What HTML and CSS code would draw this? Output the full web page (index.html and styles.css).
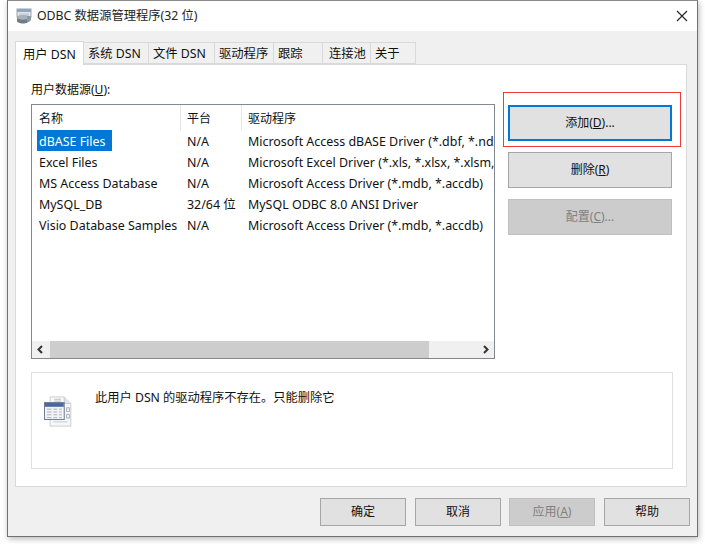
FILE: index.html
```html
<!DOCTYPE html>
<html lang="zh-CN">
<head>
<meta charset="utf-8">
<title>ODBC 数据源管理程序(32 位)</title>
<link rel="stylesheet" href="styles.css">
</head>
<body>
<div class="window">
  <header class="titlebar">
    <svg class="app-icon" width="16" height="16" viewBox="0 0 16 16">
      <rect x="1" y="1" width="14" height="8" fill="#e4e8ee" stroke="#9aa3ad"/>
      <rect x="1" y="1" width="14" height="3" fill="#8fa6bf"/>
      <path d="M3 6h10M3 8h10" stroke="#b6bcc4"/>
      <ellipse cx="7" cy="9" rx="6" ry="2" fill="#a9b4bd"/>
      <path d="M1 9v4c0 1.300 2.700 2.500 6 2.500s6-1.200 6-2.500V9z" fill="#6f7d88"/>
      <ellipse cx="7" cy="9.500" rx="6" ry="2.200" fill="#a6b1ba"/>
      <path d="M11 8h4v4l-2 2h-2z" fill="#8d99a3"/>
    </svg>
    <span class="title">ODBC 数据源管理程序(32 位)</span>
    <svg class="close" width="12" height="12" viewBox="0 0 12 12">
      <path d="M1 1l10 10M11 1L1 11" stroke="#222" stroke-width="1.100" fill="none"/>
    </svg>
  </header>
  <div class="client">
    <nav class="tabs">
      <div class="tab active t1">用户 DSN</div>
      <div class="tab t2">系统 DSN</div>
      <div class="tab t3">文件 DSN</div>
      <div class="tab t4">驱动程序</div>
      <div class="tab t5">跟踪</div>
      <div class="tab t6">连接池</div>
      <div class="tab t7">关于</div>
    </nav>
    <main class="panel">
      <div class="list-side">
        <div class="field-label">用户数据源(<u>U</u>):</div>
        <div class="listbox">
          <div class="list-clip">
            <div class="row head">
              <span class="c1">名称</span><span class="c2">平台</span><span class="c3">驱动程序</span>
            </div>
            <div class="row"><span class="c1"><span class="selected">dBASE Files</span></span><span class="c2">N/A</span><span class="c3">Microsoft Access dBASE Driver (*.dbf, *.ndx, *.mdx)</span></div>
            <div class="row"><span class="c1">Excel Files</span><span class="c2">N/A</span><span class="c3">Microsoft Excel Driver (*.xls, *.xlsx, *.xlsm, *.xlsb)</span></div>
            <div class="row"><span class="c1">MS Access Database</span><span class="c2">N/A</span><span class="c3">Microsoft Access Driver (*.mdb, *.accdb)</span></div>
            <div class="row"><span class="c1">MySQL_DB</span><span class="c2">32/64 位</span><span class="c3">MySQL ODBC 8.0 ANSI Driver</span></div>
            <div class="row"><span class="c1">Visio Database Samples</span><span class="c2">N/A</span><span class="c3">Microsoft Access Driver (*.mdb, *.accdb)</span></div>
          </div>
          <div class="hscroll">
            <svg class="arrow first" width="18" height="17" viewBox="0 0 18 17"><path d="M10 5l-3.500 3.500L10 12" stroke="#333" stroke-width="2" fill="none"/></svg>
            <div class="track"><div class="thumb"></div></div>
            <svg class="arrow" width="17" height="17" viewBox="0 0 17 17"><path d="M7 5l3.500 3.500L7 12" stroke="#333" stroke-width="2" fill="none"/></svg>
          </div>
        </div>
      </div>
      <div class="actions">
        <div class="highlight">
          <button class="btn side primary">添加(<u>D</u>)...</button>
        </div>
        <button class="btn side after-highlight">删除(<u>R</u>)</button>
        <button class="btn side disabled">配置(<u>C</u>)...</button>
      </div>
      <section class="info">
        <svg class="info-icon" width="32" height="33" viewBox="0 0 34 34">
          <path d="M6.500 1.500h15l7 7v24h-22z" fill="#f6f7f8" stroke="#c9ccd0"/>
          <path d="M21.500 1.500v7h7" fill="#e3e5e8" stroke="#c9ccd0"/>
          <path d="M11 4h7M11 6h7" stroke="#b9bdc3"/>
          <path d="M24 13h3v4h-3zM24 20h3v4h-3z" fill="none" stroke="#a8adb5"/>
          <path d="M10 28h15" stroke="#c3c6cb"/>
          <rect x="0.500" y="7.500" width="21" height="18" fill="#f3f4f7" stroke="#6c7488"/>
          <rect x="1" y="8" width="20" height="4" fill="#46679f"/>
          <path d="M3 14.500h5M10 14.500h4M16 14.500h3M3 17.500h5M10 17.500h4M16 17.500h3M3 20.500h5M10 20.500h4M16 20.500h3M3 23.500h5M10 23.500h4M16 23.500h3" stroke="#a9aebb"/>
        </svg>
        <p class="info-text">此用户 DSN 的驱动程序不存在。只能删除它</p>
      </section>
    </main>
    <footer class="footer">
      <button class="btn foot">确定</button>
      <button class="btn foot">取消</button>
      <button class="btn foot disabled">应用(<u>A</u>)</button>
      <button class="btn foot">帮助</button>
    </footer>
  </div>
</div>
</body>
</html>
```

FILE: styles.css
```css
* { box-sizing: border-box; }
html, body { margin: 0; height: 100%; }
body {
  background: #fff;
  font: 12px/16px "Noto Sans", "Noto Sans CJK SC", sans-serif;
  color: #111;
  overflow: hidden;
}
.window {
  margin: 0 0 0 7px;
  width: 691px;
  height: 537px;
  border: 1px solid #707070;
  border-top-color: #8a8a8a;
  background: #f0f0f0;
  box-shadow: 1px 2px 6px rgba(0, 0, 0, .28);
  display: flex;
  flex-direction: column;
}
.titlebar {
  height: 30px;
  background: #fff;
  display: flex;
  align-items: center;
  padding: 0 9px 0 8px;
  flex: none;
}
.app-icon { margin-right: 5px; flex: none; }
.title { flex: 1; font-size: 12.300px; color: #222; }
.client { flex: 1; padding: 10px 10px 0 7px; display: flex; flex-direction: column; }
.tabs { display: flex; height: 23px; align-items: flex-start; position: relative; z-index: 1; }
.tab {
  height: 22px;
  margin-top: 1px;
  border: 1px solid #d9d9d9;
  border-left-width: 0;
  background: #f0f0f0;
  padding-left: 4px;
  line-height: 22px;
  white-space: nowrap;
  font-size: 12.300px;
}
.tab.active {
  height: 24px;
  margin-top: 0;
  border-left-width: 1px;
  border-bottom: 0;
  background: #fff;
  padding: 2px 0 0 7px;
}
.t1 { width: 69px; }
.t2 { width: 65px; }
.t3 { width: 66px; }
.t4 { width: 59px; }
.t5 { width: 49px; }
.t6 { width: 48px; padding-left: 6px; }
.t7 { width: 45px; }
.panel {
  height: 423px;
  width: 672px;
  background: #fff;
  border: 1px solid #d9d9d9;
  display: grid;
  grid-template-columns: 464px 1fr;
  grid-template-rows: 279px 1fr;
  padding: 15px 14px 17px 15px;
  column-gap: 8px;
}
.list-side { display: flex; flex-direction: column; }
.field-label { height: 24px; padding-top: 2px; }
.listbox {
  height: 255px;
  border: 1px solid #828790;
  display: flex;
  flex-direction: column;
  background: #fff;
}
.list-clip { flex: 1; overflow: hidden; }
.row { display: flex; height: 21px; line-height: 23px; white-space: nowrap; font-size: 12.450px; }
.head { height: 25px; line-height: 27px; font-size: 12px; }
.head span { border-right: 1px solid #e5e5e5; height: 25px; }
.head .c3 { border-right: 0; }
.c1 { width: 149px; padding-left: 7px; flex: none; }
.c2 { width: 61px; padding-left: 6px; flex: none; }
.c3 { flex: none; padding-left: 6px; }
.selected {
  display: inline-block;
  vertical-align: top;
  background: #0078d7;
  color: #fff;
  margin-left: -2px;
  padding: 0 2px;
  width: 75px;
  height: 21px;
}
.hscroll { height: 17px; display: flex; background: #f0f0f0; flex: none; }
.arrow { flex: none; }
.track { flex: 1; display: flex; }
.thumb { width: 379px; background: #cdcdcd; }
.actions { display: flex; flex-direction: column; align-items: flex-start; }
.highlight {
  width: 178px;
  height: 55px;
  margin-top: 12px;
  border: 1px solid #f03a3a;
  padding: 12px 0 0 4px;
  flex: none;
}
.btn {
  font: inherit;
  color: #111;
  background: #e1e1e1;
  border: 1px solid #a6a6a6;
  padding: 0;
  flex: none;
}
.side { width: 164px; height: 36px; display: block; }
.actions > .side { margin: 11px 0 0 5px; }
.actions > .after-highlight { margin-top: 5px; }
.primary { border: 2px solid #0078d7; }
.disabled { background: #cccccc; border-color: #bfbfbf; color: #808080; }
.info {
  grid-column: 1 / 3;
  width: 642px;
  height: 97px;
  border: 1px solid #e0e0e0;
  margin-top: 13px;
  display: flex;
  align-items: flex-start;
  padding: 17px 0 0 12px;
}
.info-icon { flex: none; margin-top: 5px; }
.info-text { margin: 0 0 0 19px; color: #111; font-size: 12.250px; }
.footer {
  display: flex;
  justify-content: flex-end;
  gap: 9px;
  padding: 11px 0 0;
  width: 675px;
}
.foot { width: 86px; height: 28px; }
.foot.disabled { margin-left: -1px; }
```
